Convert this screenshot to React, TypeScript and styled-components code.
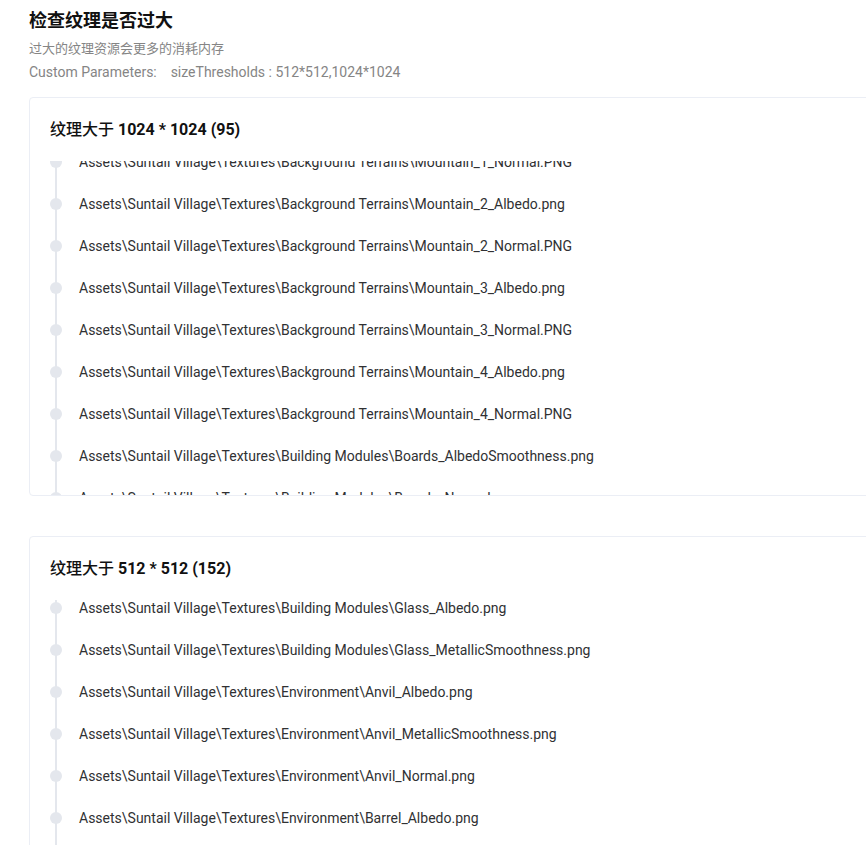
import React, { useLayoutEffect, useRef } from "react";
import styled, { createGlobalStyle } from "styled-components";

const Global = createGlobalStyle`
  html, body {
    margin: 0;
    padding: 0;
    background: #ffffff;
    overflow: hidden;
  }
  body {
    font-family: Roboto, "Noto Sans CJK SC", "Noto Sans", sans-serif;
    color: #303133;
  }
`;

const Page = styled.div`
  padding: 9px 0 0 29px;
  width: 1100px;
`;

const Title = styled.h1`
  margin: 0;
  font-size: 18px;
  line-height: 24px;
  font-weight: 700;
  color: #111111;
`;

const Desc = styled.div`
  margin-top: 5px;
  font-size: 13px;
  line-height: 22px;
  color: #858585;
`;

const Params = styled.div`
  margin-top: 1px;
  font-size: 14px;
  line-height: 22px;
  color: #858585;
  white-space: pre;
`;

const Cards = styled.div`
  margin-top: 14px;
  display: flex;
  flex-direction: column;
  gap: 40px;
`;

const Card = styled.section`
  box-sizing: border-box;
  height: 399px;
  border: 1px solid #ebeef5;
  border-radius: 4px;
  background: #fff;
  display: flex;
  flex-direction: column;
  padding: 20px 20px 0 20px;
`;

const CardTitle = styled.h2`
  margin: 0;
  font-size: 16px;
  line-height: 24px;
  font-weight: 700;
  color: #111111;
`;

const TitleCjk = styled.span`
  font-weight: 500;
`;

const Scroll = styled.div`
  margin-top: 19px;
  flex: 1;
  min-height: 0;
  overflow-y: auto;
  padding-left: 1px;
  scrollbar-width: none;
  &::-webkit-scrollbar { display: none; }
`;

const Timeline = styled.ul`
  list-style: none;
  margin: 0;
  padding: 0;
`;

const Item = styled.li<{ $last?: boolean }>`
  position: relative;
  padding-bottom: 20px;
  &::before {
    content: "";
    display: ${(p) => (p.$last ? "none" : "block")};
    position: absolute;
    left: 4px;
    top: 0;
    height: 100%;
    border-left: 2px solid #e4e7ed;
  }
`;

const Dot = styled.div`
  position: absolute;
  left: -1px;
  top: 2px;
  width: 12px;
  height: 12px;
  border-radius: 50%;
  background: #e4e7ed;
`;

const Content = styled.div`
  position: relative;
  top: -3px;
  padding-left: 28px;
  font-size: 14px;
  line-height: 22px;
  color: #303133;
  white-space: nowrap;
`;

const P = "Assets\\Suntail Village\\Textures\\";

const big = [
  "Background Terrains\\Mountain_1_Albedo.png",
  "Background Terrains\\Mountain_1_Normal.PNG",
  "Background Terrains\\Mountain_2_Albedo.png",
  "Background Terrains\\Mountain_2_Normal.PNG",
  "Background Terrains\\Mountain_3_Albedo.png",
  "Background Terrains\\Mountain_3_Normal.PNG",
  "Background Terrains\\Mountain_4_Albedo.png",
  "Background Terrains\\Mountain_4_Normal.PNG",
  "Building Modules\\Boards_AlbedoSmoothness.png",
  "Building Modules\\Boards_Normal.png",
  "Building Modules\\Bricks_AlbedoSmoothness.png",
  "Building Modules\\Bricks_Normal.png",
];

const mid = [
  "Building Modules\\Glass_Albedo.png",
  "Building Modules\\Glass_MetallicSmoothness.png",
  "Environment\\Anvil_Albedo.png",
  "Environment\\Anvil_MetallicSmoothness.png",
  "Environment\\Anvil_Normal.png",
  "Environment\\Barrel_Albedo.png",
  "Environment\\Barrel_MetallicSmoothness.png",
  "Environment\\Barrel_Normal.png",
  "Environment\\Bench_Albedo.png",
  "Environment\\Bench_Normal.png",
];

function Group({
  label,
  size,
  items,
  scrollTop = 0,
}: {
  label: string;
  size: string;
  items: string[];
  scrollTop?: number;
}) {
  const ref = useRef<HTMLDivElement>(null);
  useLayoutEffect(() => {
    if (ref.current) ref.current.scrollTop = scrollTop;
  }, [scrollTop]);
  return (
    <Card>
      <CardTitle>
        <TitleCjk>{label}</TitleCjk> {size}
      </CardTitle>
      <Scroll ref={ref}>
        <Timeline>
          {items.map((it, i) => (
            <Item key={it} $last={i === items.length - 1}>
              <Dot />
              <Content>{P + it}</Content>
            </Item>
          ))}
        </Timeline>
      </Scroll>
    </Card>
  );
}

export default function App() {
  return (
    <>
      <Global />
      <Page>
        <Title>检查纹理是否过大</Title>
        <Desc>过大的纹理资源会更多的消耗内存</Desc>
        <Params>{"Custom Parameters:    sizeThresholds : 512*512,1024*1024"}</Params>
        <Cards>
          <Group label="纹理大于" size="1024 * 1024 (95)" items={big} scrollTop={49} />
          <Group label="纹理大于" size="512 * 512 (152)" items={mid} />
        </Cards>
      </Page>
    </>
  );
}
